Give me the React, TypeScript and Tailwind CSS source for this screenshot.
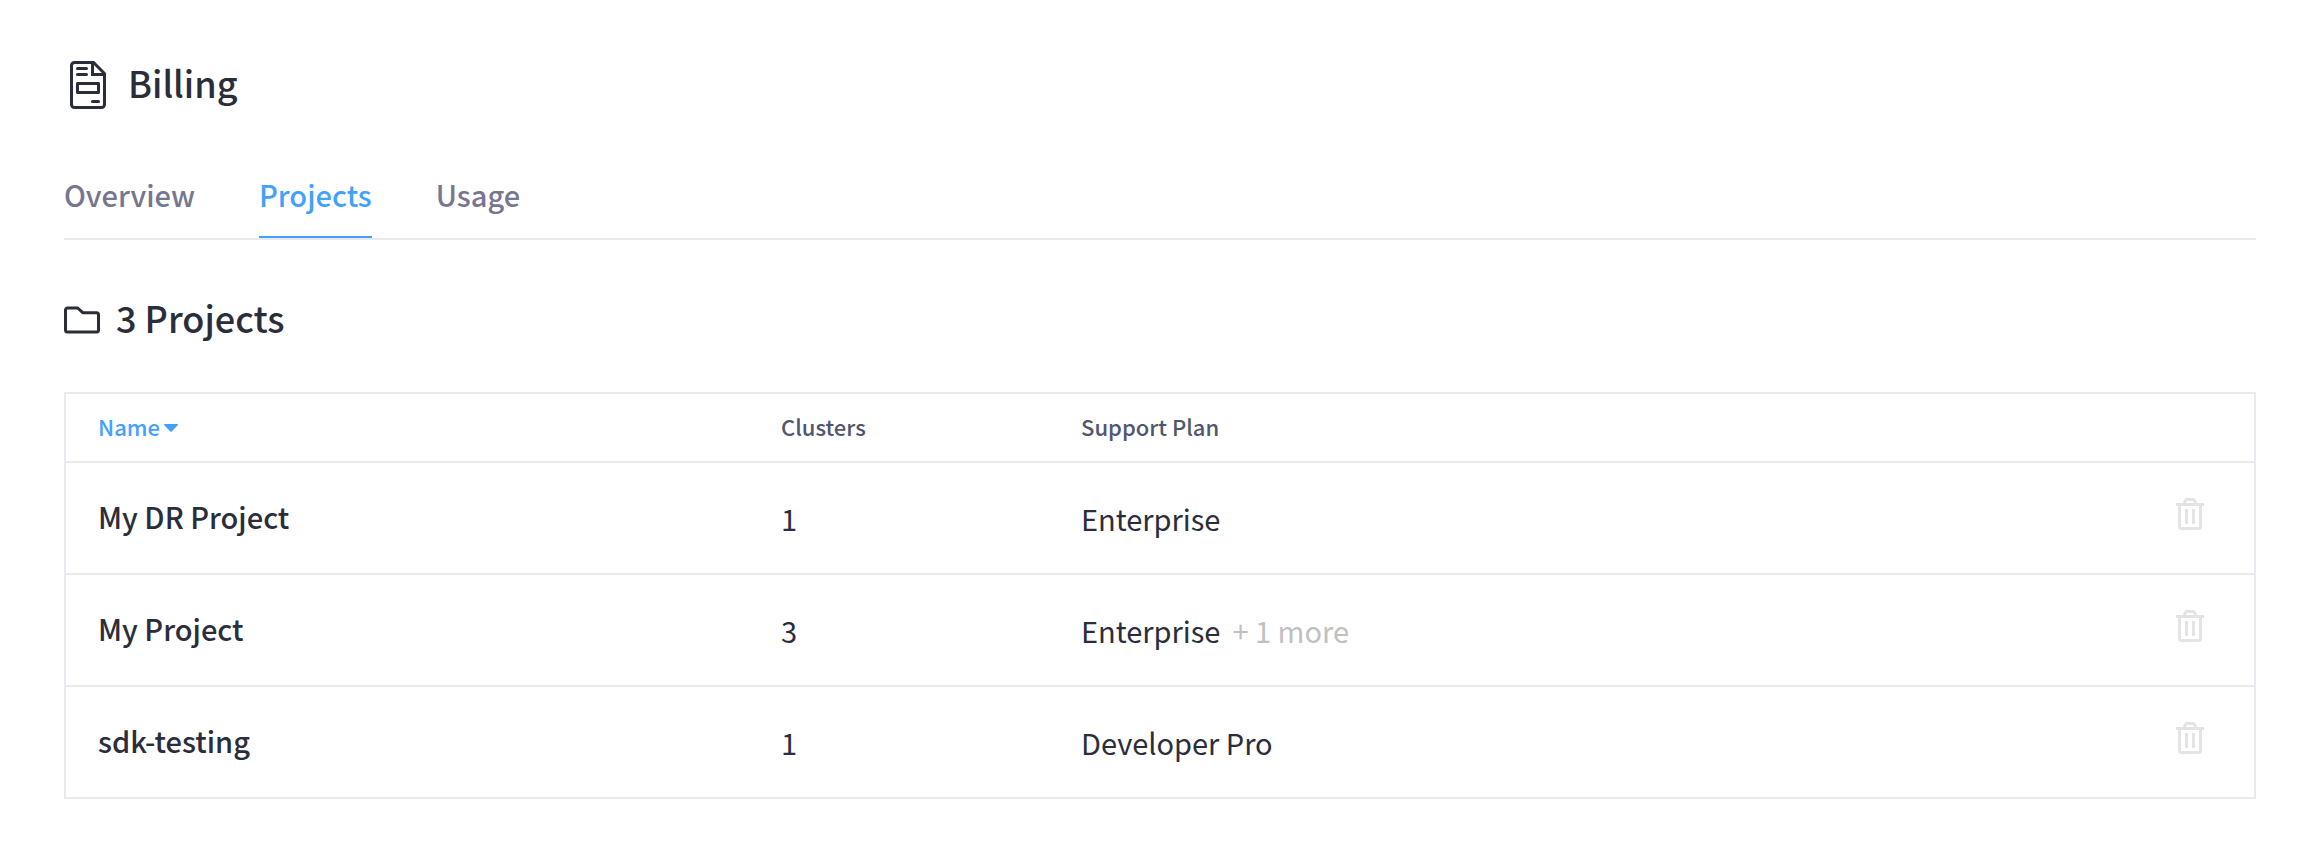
type Project = { name: string; clusters: number; plan: string; more?: string };

const tabs = ["Overview", "Projects", "Usage"];

const projects: Project[] = [
  { name: "My DR Project", clusters: 1, plan: "Enterprise" },
  { name: "My Project", clusters: 3, plan: "Enterprise", more: "+ 1 more" },
  { name: "sdk-testing", clusters: 1, plan: "Developer Pro" },
];

function InvoiceIcon() {
  return (
    <svg className="mt-[3px] h-12 w-9 shrink-0" viewBox="0 0 36 48" fill="none" stroke="currentColor" strokeWidth="3" aria-hidden="true">
      <path d="M4.5 1.5H23.5L34.5 12.5V43.5A3 3 0 0 1 31.5 46.5H4.5A3 3 0 0 1 1.5 43.5V4.5A3 3 0 0 1 4.5 1.5Z" />
      <path d="M22.5 2V13.5H34" />
      <path d="M7.5 7.5H16.5M7.5 13.5H16.5M22.5 40.5H28.5" strokeLinecap="round" />
      <rect x="7.5" y="22.5" width="21" height="9" strokeLinejoin="round" />
    </svg>
  );
}

function FolderIcon() {
  return (
    <svg className="mt-3 h-[30px] w-9 shrink-0" viewBox="0 0 36 30" fill="none" stroke="currentColor" strokeWidth="3" strokeLinejoin="round" aria-hidden="true">
      <path d="M3.5 3H13.7L18.7 7.7H32.5A2 2 0 0 1 34.5 9.7V25A2 2 0 0 1 32.5 27H3.5A2 2 0 0 1 1.5 25V5A2 2 0 0 1 3.5 3Z" />
    </svg>
  );
}

function TrashIcon() {
  return (
    <svg className="h-8 w-7" viewBox="0 0 28 32" fill="none" stroke="currentColor" strokeWidth="3" aria-hidden="true">
      <path d="M0 6.5H28" />
      <path d="M8 6.5L9.3 2.8A2 2 0 0 1 11.2 1.5H16.8A2 2 0 0 1 18.7 2.8L20 6.5" />
      <path d="M3.5 7V28.5A2 2 0 0 0 5.5 30.5H22.5A2 2 0 0 0 24.5 28.5V7" />
      <path d="M10.5 11V26M17.5 11V26" />
    </svg>
  );
}

export default function App() {
  return (
    <main className="min-h-screen bg-white px-16 pt-[58px] pb-[61px] font-['Source_Sans_Pro','Noto_Sans_CJK_SC',sans-serif] text-[29px] leading-10 text-[#2b2d3a]">
      <header className="flex items-start gap-[22px] pl-1.5">
        <InvoiceIcon />
        <h1 className="text-[36px] leading-[48px] font-medium">Billing</h1>
      </header>

      <nav aria-label="Billing sections" className="mt-[61px] flex gap-16 border-b-2 border-[#e9e9f2]">
        {tabs.map((tab) => (
          <a
            key={tab}
            href={`#${tab.toLowerCase()}`}
            aria-current={tab === "Projects" ? "page" : undefined}
            className={
              tab === "Projects"
                ? "border-b-2 border-[#42a1ff] pb-[18px] leading-[48px] font-medium text-[#42a1ff]"
                : "border-b-2 border-transparent pb-[18px] leading-[48px] font-medium text-[#767690]"
            }
          >
            {tab}
          </a>
        ))}
      </nav>

      <section className="mt-[53px]">
        <div className="flex items-start gap-4">
          <FolderIcon />
          <h2 className="text-[36px] leading-[48px] font-medium">3 Projects</h2>
        </div>

        <div className="mt-[51px] border-2 border-[#e9e9f2]">
          <table className="w-full table-fixed border-separate border-spacing-0 text-left">
            <thead className="text-[22px] leading-8 text-[#505670]">
              <tr className="h-[67px]">
                <th scope="col" className="w-[715px] pb-1 pl-8 font-medium text-[#42a1ff]" aria-sort="ascending">
                  <button type="button" className="flex items-center gap-1">
                    Name
                    <svg className="mt-1 h-2 w-3.5" viewBox="0 0 14 8" fill="currentColor" aria-hidden="true">
                      <path d="M0.7 0H13.3C14 0 14.2 0.8 13.7 1.3L7.7 7.6Q7 8.2 6.3 7.6L0.3 1.3C-0.2 0.8 0 0 0.7 0Z" />
                    </svg>
                  </button>
                </th>
                <th scope="col" className="w-[300px] pb-1 font-medium">Clusters</th>
                <th scope="col" className="pb-1 font-medium">Support Plan</th>
                <td className="w-[120px]" />
              </tr>
            </thead>
            <tbody>
              {projects.map((p) => (
                <tr key={p.name} className="h-28">
                  <th scope="row" className="border-t-2 border-[#e9e9f2] pb-1 pl-8 font-medium">{p.name}</th>
                  <td className="border-t-2 border-[#e9e9f2]">{p.clusters}</td>
                  <td className="border-t-2 border-[#e9e9f2]">
                    {p.plan}
                    {p.more && <span className="ml-3 text-[#c0c0c0]">{p.more}</span>}
                  </td>
                  <td className="border-t-2 border-[#e9e9f2] pr-[50px] pb-2">
                    <button type="button" aria-label={`Delete ${p.name}`} className="ml-auto block text-[#e4e4e4]">
                      <TrashIcon />
                    </button>
                  </td>
                </tr>
              ))}
            </tbody>
          </table>
        </div>
      </section>
    </main>
  );
}
